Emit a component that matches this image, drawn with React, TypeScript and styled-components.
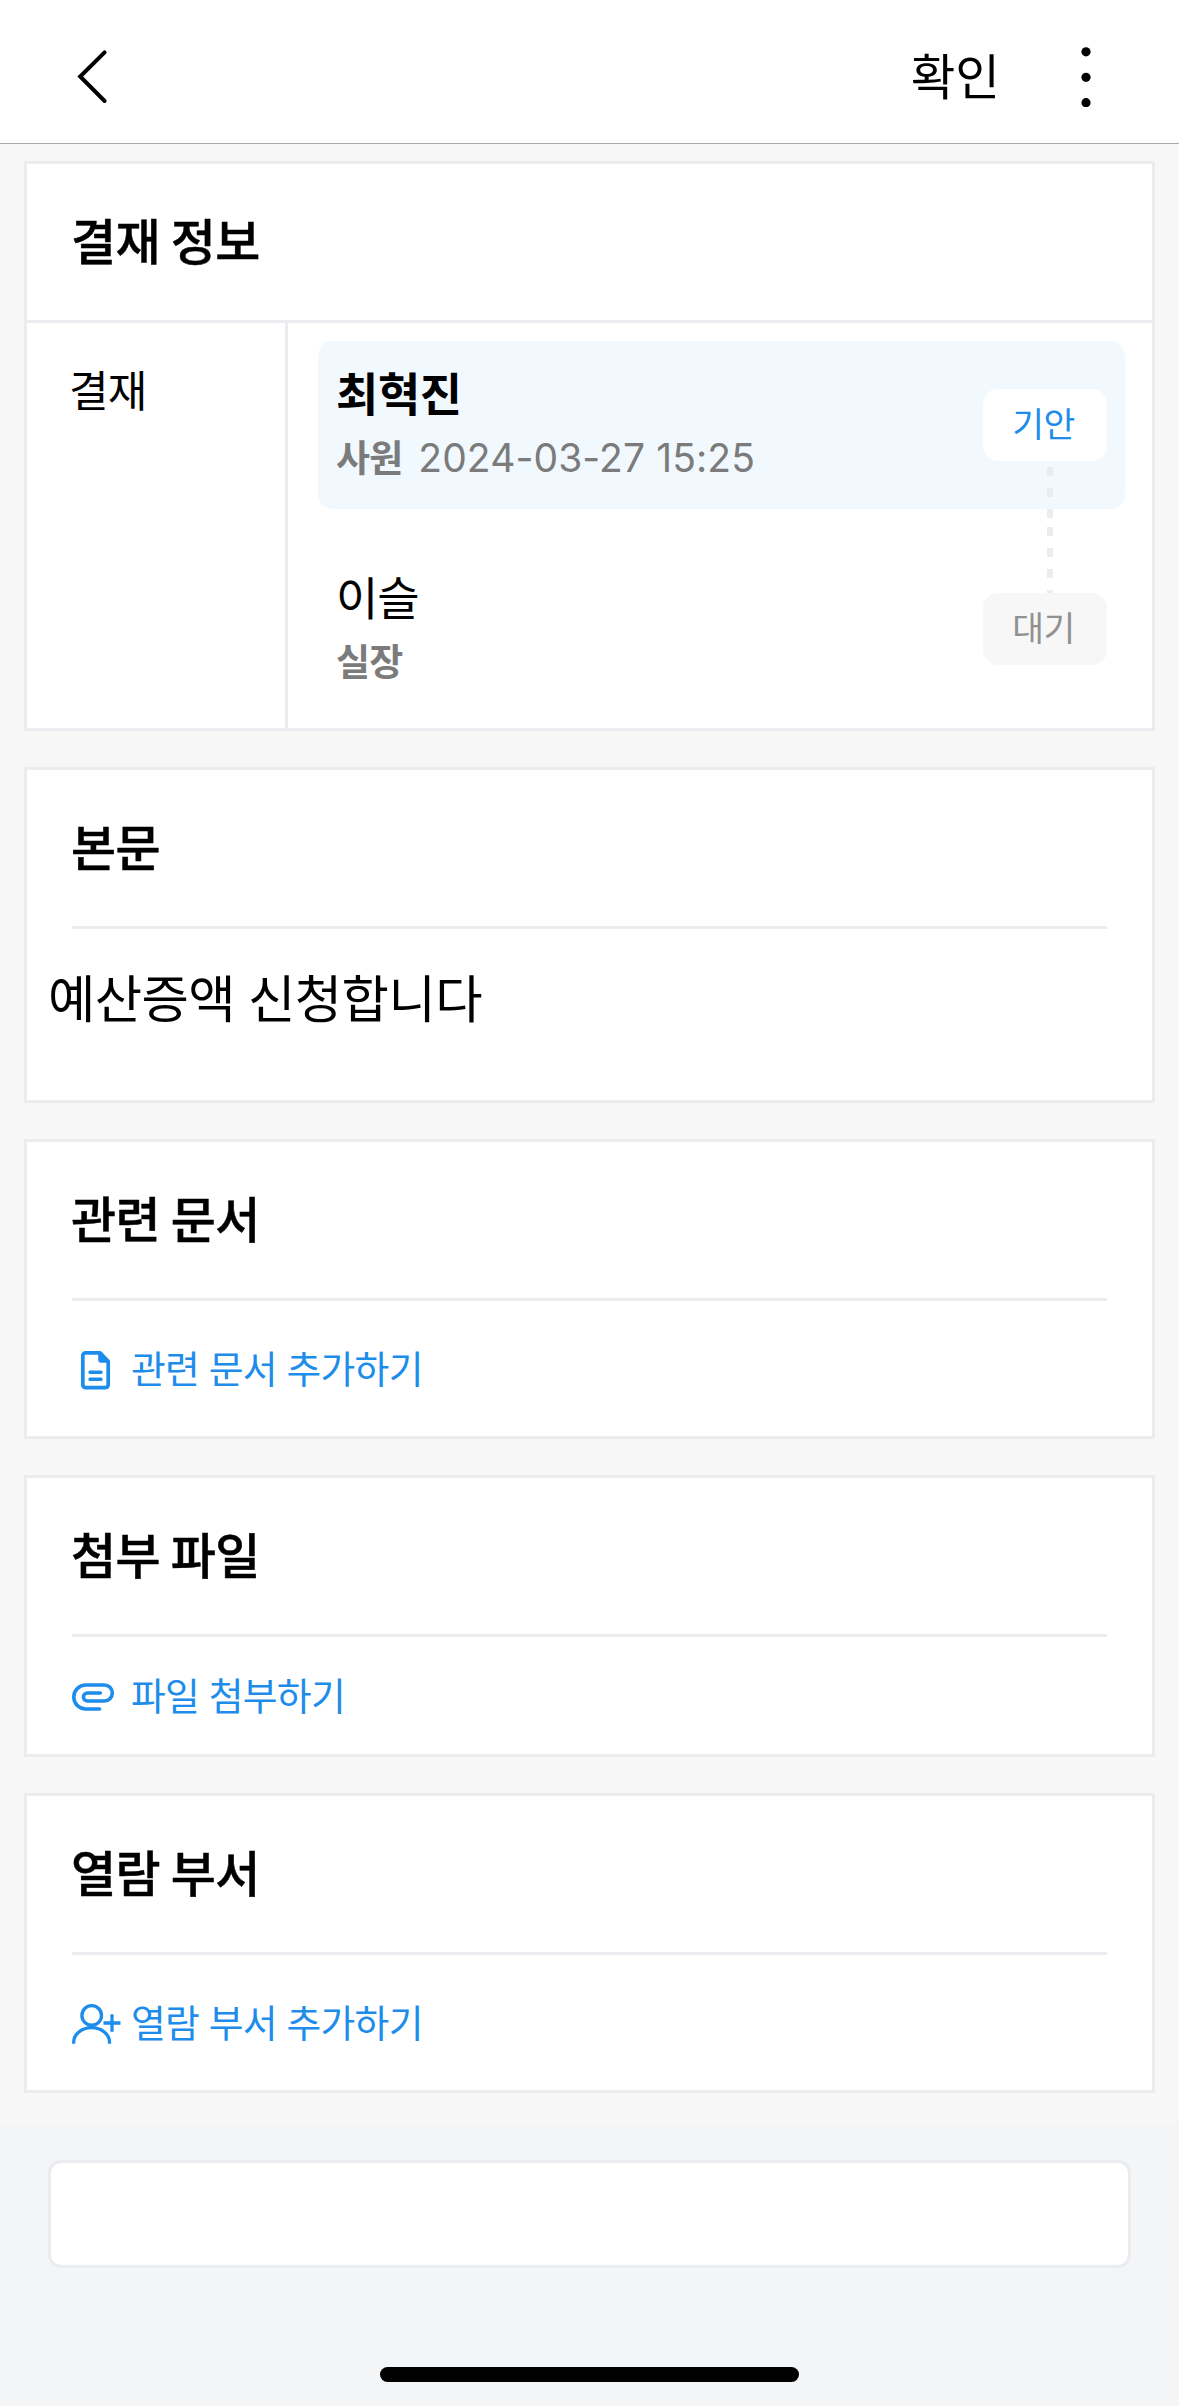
import React from "react";
import styled, { createGlobalStyle } from "styled-components";

const line = "#ebecf0";
const blue = "#1d8ceb";

const GlobalStyle = createGlobalStyle`
  * { box-sizing: border-box; }
  body {
    margin: 0;
    background: #f7f7f7;
    color: #000;
    font-family: "Noto Sans CJK KR", sans-serif;
  }
  h2, p { margin: 0; }
  button { border: 0; padding: 0; background: none; font: inherit; color: inherit; }
`;

const Screen = styled.div`
  display: flex;
  flex-direction: column;
  width: 1179px;
  min-height: 2406px;
`;

const TopBar = styled.header`
  display: flex;
  align-items: center;
  justify-content: space-between;
  height: 144px;
  padding: 10px 88px 0 72px;
  background: #fff;
  border-bottom: 1px solid #a9a9ab;
`;

const IconButton = styled.button`
  display: flex;
`;

const Actions = styled.div`
  display: flex;
  align-items: center;
  gap: 81px;
`;

const ConfirmButton = styled.button`
  padding-bottom: 6px;
  font-size: 48.5px;
  line-height: 72px;
`;

const Content = styled.main`
  display: flex;
  flex-direction: column;
  gap: 36px;
  padding: 17px 24px 31px;
`;

const Card = styled.section`
  display: flex;
  flex-direction: column;
  background: #fff;
  border: 3px solid ${line};
`;

const CardHead = styled.div<{ $inset?: boolean }>`
  display: flex;
  align-items: center;
  height: 159px;
  margin: 0 ${(p) => (p.$inset ? 45 : 0)}px;
  padding: 0 ${(p) => (p.$inset ? 0 : 45)}px 6px;
  border-bottom: 3px solid ${line};
`;

const CardTitle = styled.h2`
  margin-left: -1px;
  font-size: 49px;
  font-weight: 500;
  line-height: 72px;
  letter-spacing: -0.5px;
  -webkit-text-stroke: 0.5px currentColor;
`;

const ApprovalBody = styled.div`
  display: grid;
  grid-template-columns: 261px 1fr;
  height: 405px;
`;

const ApprovalLabel = styled.div`
  padding: 35px 0 0 42px;
  border-right: 3px solid ${line};
  font-size: 43px;
  line-height: 60px;
  letter-spacing: -0.8px;
`;

const StepList = styled.div`
  display: flex;
  flex-direction: column;
  gap: 36px;
  padding: 18px 27px 15px 30px;
`;

const Step = styled.div<{ $active?: boolean }>`
  position: relative;
  display: flex;
  align-items: center;
  justify-content: space-between;
  height: 168px;
  padding: 0 18px;
  border-radius: 15px;
  background: ${(p) => (p.$active ? "#f1f9ff" : "transparent")};
`;

const Person = styled.div`
  display: flex;
  flex-direction: column;
  gap: 5px;
  padding-bottom: 3px;
`;

const Name = styled.div<{ $bold?: boolean }>`
  font-size: 46px;
  font-weight: ${(p) => (p.$bold ? 700 : 400)};
  line-height: 60px;
  letter-spacing: ${(p) => (p.$bold ? -0.4 : -1)}px;
`;

const Meta = styled.div`
  display: flex;
  align-items: baseline;
  gap: 16px;
  height: 60px;
  color: #7b7b7b;
  line-height: 60px;
`;

const Role = styled.span`
  font-size: 37px;
  font-weight: 700;
  letter-spacing: -0.9px;
`;

const Time = styled.time`
  font-family: Inter, sans-serif;
  font-size: 39px;
  letter-spacing: 0.1px;
`;

const Chip = styled.span<{ $active?: boolean }>`
  display: flex;
  align-items: center;
  justify-content: center;
  width: 124px;
  height: 72px;
  padding: 0 3px 6px 0;
  border-radius: 15px;
  background: ${(p) => (p.$active ? "#fff" : "#f7f7f7")};
  color: ${(p) => (p.$active ? blue : "#919191")};
  font-size: 34.6px;
  letter-spacing: -0.6px;
`;

const Connector = styled.div`
  position: absolute;
  top: 126px;
  right: 72px;
  width: 6px;
`;

const Dashes = styled.div<{ $height: number }>`
  height: ${(p) => p.$height}px;
  background: repeating-linear-gradient(${line} 0 9px, transparent 9px 21px);
`;

const BodyText = styled.p`
  height: 171px;
  padding: 31px 21px 0;
  font-size: 51.5px;
  line-height: 72px;
  letter-spacing: -0.6px;
  word-spacing: 2px;
`;

const AddButton = styled.button<{ $height: number }>`
  display: flex;
  align-items: center;
  gap: 9px;
  height: ${(p) => p.$height}px;
  padding: 0 45px;
  color: ${blue};
`;

const AddLabel = styled.span`
  padding-bottom: 3px;
  font-size: 37.8px;
  line-height: 56px;
  letter-spacing: -0.7px;
  word-spacing: 1.8px;
`;

const Footer = styled.footer`
  display: flex;
  flex-direction: column;
  justify-content: space-between;
  height: 282px;
  padding: 36px 48px 24px;
  background: #f4f5f7;
`;

const CommentInput = styled.input`
  width: 100%;
  height: 108px;
  padding: 0 30px;
  border: 3px solid ${line};
  border-radius: 13px;
  background: #fff;
  font: inherit;
  font-size: 42px;
  outline: none;
`;

const HomeBar = styled.div`
  align-self: center;
  width: 419px;
  height: 15px;
  border-radius: 8px;
  background: #000;
`;

const BackIcon = () => (
  <svg width="40" height="60" viewBox="0 0 40 60" fill="none" stroke="#000" strokeWidth="4" strokeLinecap="round">
    <path d="M32.6 5.3 8.2 29.5 32.6 54" />
  </svg>
);

const MoreIcon = () => (
  <svg width="10" height="60" viewBox="0 0 10 60">
    <circle cx="5" cy="4.8" r="4.6" />
    <circle cx="5" cy="30.3" r="4.6" />
    <circle cx="5" cy="55.7" r="4.6" />
  </svg>
);

const DocumentIcon = () => (
  <svg width="50" height="47" viewBox="0 0 50 47" fill="none" stroke={blue} strokeWidth="3.7">
    <path d="M13.8 7.8H28l8.2 8.5v23.4a3 3 0 0 1-3 3H13.8a3 3 0 0 1-3-3V10.8a3 3 0 0 1 3-3Z" strokeLinejoin="round" />
    <path d="M26.2 7v7.7a3 3 0 0 0 3 3H37L29 7.5Z" fill={blue} stroke="none" />
    <path d="M18 27.3h11M18 34.3h11" strokeWidth="3.4" strokeLinecap="round" />
  </svg>
);

const ClipIcon = () => (
  <svg width="50" height="47" viewBox="0 0 50 47" fill="none" stroke={blue} strokeWidth="3.6" strokeLinecap="round">
    <path d="M27.6 37H13.8a12 12 0 0 1 0-24h18.5a8 8 0 0 1 0 16H15.4a4 4 0 0 1 0-8h12.9" />
  </svg>
);

const AddPersonIcon = () => (
  <svg width="50" height="47" viewBox="0 0 50 47" fill="none" stroke={blue} strokeWidth="3.3">
    <circle cx="19.7" cy="16.4" r="9.8" />
    <path d="M1.7 44.8v-1.6c0-8 8-14.5 17.9-14.5s17.9 6.5 17.9 14.5v1.6M31.5 24h17M40 15.2v17.6" />
  </svg>
);

interface StepData {
  name: string;
  role: string;
  time?: string;
  status: string;
  active?: boolean;
}

const steps: StepData[] = [
  { name: "최혁진", role: "사원", time: "2024-03-27 15:25", status: "기안", active: true },
  { name: "이슬", role: "실장", status: "대기" },
];

const attachments = [
  { title: "관련 문서", action: "관련 문서 추가하기", Icon: DocumentIcon, height: 135 },
  { title: "첨부 파일", action: "파일 첨부하기", Icon: ClipIcon, height: 117 },
  { title: "열람 부서", action: "열람 부서 추가하기", Icon: AddPersonIcon, height: 135 },
];

export default function App() {
  return (
    <Screen>
      <GlobalStyle />
      <TopBar>
        <IconButton aria-label="뒤로">
          <BackIcon />
        </IconButton>
        <Actions>
          <ConfirmButton>확인</ConfirmButton>
          <IconButton aria-label="더보기">
            <MoreIcon />
          </IconButton>
        </Actions>
      </TopBar>
      <Content>
        <Card>
          <CardHead>
            <CardTitle>결재 정보</CardTitle>
          </CardHead>
          <ApprovalBody>
            <ApprovalLabel>결재</ApprovalLabel>
            <StepList>
              {steps.map((step, i) => (
                <Step key={step.name} $active={step.active}>
                  <Person>
                    <Name $bold={step.active}>{step.name}</Name>
                    <Meta>
                      <Role>{step.role}</Role>
                      {step.time && <Time>{step.time}</Time>}
                    </Meta>
                  </Person>
                  <Chip $active={step.active}>{step.status}</Chip>
                  {i < steps.length - 1 && (
                    <Connector>
                      <Dashes $height={60} />
                      <Dashes $height={66} />
                    </Connector>
                  )}
                </Step>
              ))}
            </StepList>
          </ApprovalBody>
        </Card>
        <Card>
          <CardHead $inset>
            <CardTitle>본문</CardTitle>
          </CardHead>
          <BodyText>예산증액 신청합니다</BodyText>
        </Card>
        {attachments.map(({ title, action, Icon, height }) => (
          <Card key={title}>
            <CardHead $inset>
              <CardTitle>{title}</CardTitle>
            </CardHead>
            <AddButton $height={height}>
              <Icon />
              <AddLabel>{action}</AddLabel>
            </AddButton>
          </Card>
        ))}
      </Content>
      <Footer>
        <CommentInput aria-label="의견" />
        <HomeBar />
      </Footer>
    </Screen>
  );
}
